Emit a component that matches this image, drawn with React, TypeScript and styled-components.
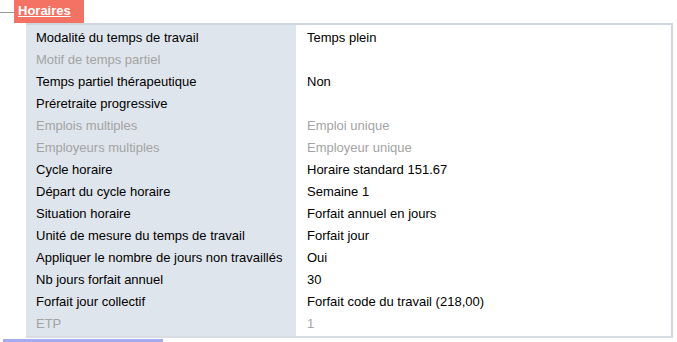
import React from 'react';
import styled, { createGlobalStyle } from 'styled-components';

const GlobalStyle = createGlobalStyle`
  html, body {
    margin: 0;
    padding: 0;
    background: #ffffff;
  }
  body {
    font-family: "Liberation Sans", Arial, sans-serif;
    font-size: 13px;
  }
`;

const Page = styled.div`
  width: 677px;
  height: 342px;
  position: relative;
  overflow: hidden;
`;

const Header = styled.div`
  display: flex;
  align-items: center;
  height: 23px;
`;

const HeaderLine = styled.div`
  width: 14px;
  height: 1px;
  background: #9a9a9a;
  margin-top: 1px;
`;

const Tab = styled.div`
  background: #f47263;
  height: 23px;
  width: 70px;
  box-sizing: border-box;
  padding: 3px 0 0 4px;
  color: #ffffff;
  font-weight: bold;
  font-size: 13px;
  text-decoration: underline;
`;

const Panel = styled.div`
  margin-left: 26px;
  width: 647px;
  height: 315px;
  box-sizing: border-box;
  border-top: 2px solid #cfd5dc;
  border-right: 2px solid #cfd5dc;
  border-bottom: 2px solid #d8dde3;
  background: linear-gradient(to right, #dfe5ec 0, #dfe5ec 270px, #ffffff 270px);
  padding-top: 1px;
`;

const Row = styled.div`
  display: grid;
  grid-template-columns: 270px 1fr;
  height: 22px;
  align-items: center;
`;

const Cell = styled.div<{ $muted?: boolean }>`
  padding-left: 10px;
  color: ${p => (p.$muted ? '#a3a3a3' : '#000000')};
  white-space: nowrap;
`;

const ValueCell = styled(Cell)`
  padding-left: 11px;
`;

const BottomBar = styled.div`
  position: absolute;
  left: 3px;
  bottom: 0;
  width: 160px;
  height: 3px;
  background: #a4abee;
`;

const rows: { label: string; value: string; muted?: boolean }[] = [
  { label: 'Modalité du temps de travail', value: 'Temps plein' },
  { label: 'Motif de temps partiel', value: '', muted: true },
  { label: 'Temps partiel thérapeutique', value: 'Non' },
  { label: 'Préretraite progressive', value: '' },
  { label: 'Emplois multiples', value: 'Emploi unique', muted: true },
  { label: 'Employeurs multiples', value: 'Employeur unique', muted: true },
  { label: 'Cycle horaire', value: 'Horaire standard 151.67' },
  { label: 'Départ du cycle horaire', value: 'Semaine 1' },
  { label: 'Situation horaire', value: 'Forfait annuel en jours' },
  { label: 'Unité de mesure du temps de travail', value: 'Forfait jour' },
  { label: 'Appliquer le nombre de jours non travaillés', value: 'Oui' },
  { label: 'Nb jours forfait annuel', value: '30' },
  { label: 'Forfait jour collectif', value: 'Forfait code du travail (218,00)' },
  { label: 'ETP', value: '1', muted: true },
];

const App: React.FC = () => {
  return (
    <Page>
      <GlobalStyle />
      <Header>
        <HeaderLine />
        <Tab>Horaires</Tab>
      </Header>
      <Panel>
        {rows.map(r => (
          <Row key={r.label}>
            <Cell $muted={r.muted}>{r.label}</Cell>
            <ValueCell $muted={r.muted}>{r.value}</ValueCell>
          </Row>
        ))}
      </Panel>
      <BottomBar />
    </Page>
  );
};

export default App;
